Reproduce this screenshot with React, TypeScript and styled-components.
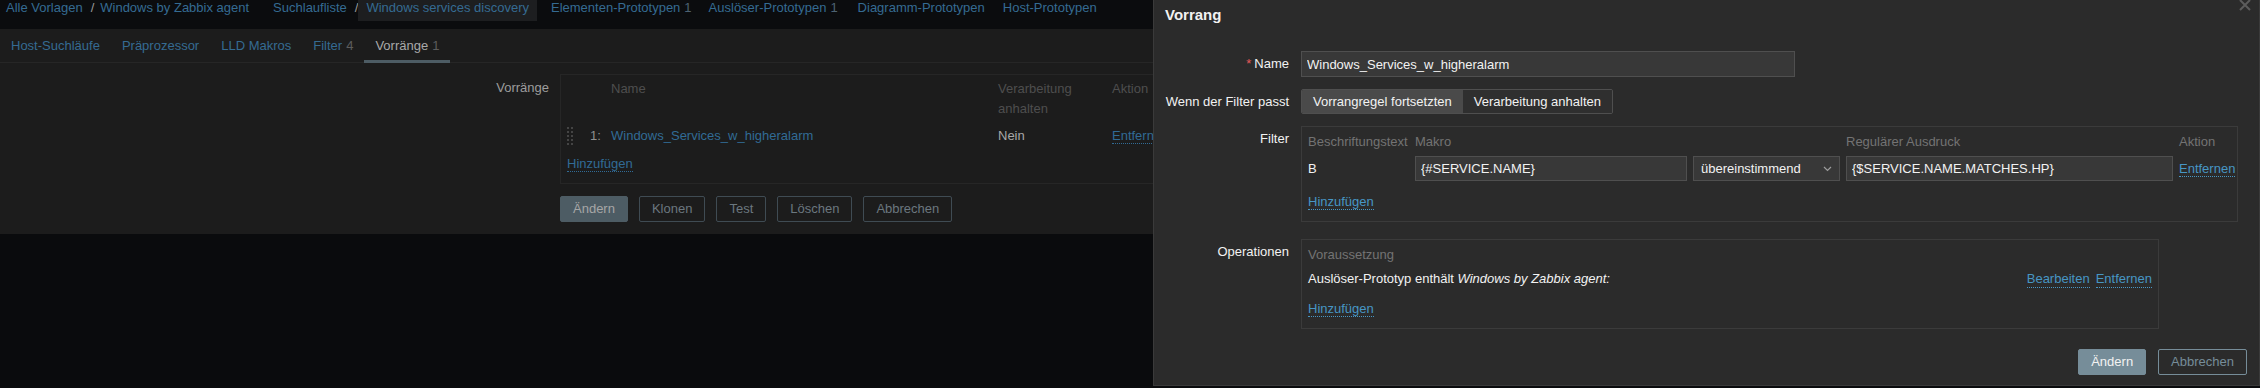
import * as React from 'react';
import styled, { createGlobalStyle } from 'styled-components';

const GlobalStyle = createGlobalStyle`
  html, body {
    margin: 0;
    padding: 0;
    background: #0a0b0d;
  }
  body {
    font-family: "Liberation Sans", Arial, sans-serif;
    font-size: 13px;
    line-height: 16px;
  }
  * {
    box-sizing: border-box;
  }
`;

const Screen = styled.div`
  position: relative;
  width: 2260px;
  height: 388px;
  overflow: hidden;
  background: #0a0b0d;
`;

/* ---------- page behind the dialog (dimmed) ---------- */

const TopNav = styled.nav`
  display: flex;
  align-items: flex-start;
  height: 29px;
  padding-left: 6px;
  background: #0b0c0e;
  white-space: nowrap;
`;

const NavLink = styled.span<{ $ml?: number }>`
  margin-left: ${(p) => p.$ml ?? 0}px;
  color: #356b92;
`;

const NavSep = styled.span<{ $mr?: number }>`
  margin: 0 ${(p) => p.$mr ?? 7}px 0 8px;
  color: #9a9a9a;
`;

const NavCurrent = styled.span`
  height: 21px;
  padding: 0 8px;
  background: #1d1e20;
  color: #356b92;
`;

const Count = styled.span`
  margin-left: 4px;
  color: #4d6272;
`;

const TabBar = styled.div`
  display: flex;
  align-items: flex-start;
  height: 34px;
  background: #1c1c1c;
  border-bottom: 1px solid #262626;
`;

const Tab = styled.span<{ $active?: boolean }>`
  height: 34px;
  padding: 9px 11px 0;
  color: ${(p) => (p.$active ? '#a9a9a9' : '#356b92')};
  border-bottom: 3px solid ${(p) => (p.$active ? '#4d5c64' : 'transparent')};
  white-space: nowrap;
`;

const TabCount = styled.span`
  margin-left: 4px;
  color: #5c5c5c;
`;

const Content = styled.div`
  background: #1c1c1c;
  padding: 11px 0 12px;
`;

const PageForm = styled.div`
  display: grid;
  grid-template-columns: 549px 720px;
  column-gap: 11px;
  row-gap: 12px;
`;

const PageLabel = styled.div`
  padding-top: 6px;
  text-align: right;
  color: #9d9d9d;
`;

const OverrideBox = styled.div`
  border: 1px solid #262626;
  padding: 4px 0 11px 6px;
`;

const OverrideGrid = styled.div`
  display: grid;
  grid-template-columns: 23px 21px 387px 114px auto;
  line-height: 20px;
  row-gap: 7px;
`;

const HeadCell = styled.div`
  color: #4e4e4e;
`;

const Handle = styled.svg`
  display: block;
`;

const RowNum = styled.div`
  color: #8f8f8f;
`;

const PageLink = styled.a<{ $dotted?: boolean }>`
  color: #316b95;
  text-decoration: none;
  border-bottom: 1px dotted ${(p) => (p.$dotted ? '#316b95' : 'transparent')};
`;

const PlainCell = styled.div`
  color: #a8a8a8;
`;

const AddRow = styled.div`
  margin-top: 10px;
`;

const ButtonRow = styled.div`
  display: flex;
  gap: 11px;
`;

const PageButton = styled.button<{ $primary?: boolean }>`
  height: 26px;
  padding: 0 12px;
  font: inherit;
  border-radius: 2px;
  border: 1px solid ${(p) => (p.$primary ? '#4d5c64' : '#3f4b53')};
  background: ${(p) => (p.$primary ? '#4d5c64' : 'transparent')};
  color: ${(p) => (p.$primary ? '#a6a6a6' : '#6b777f')};
`;

/* ---------- dialog ---------- */

const Dialog = styled.div`
  position: absolute;
  top: -1px;
  left: 1153px;
  width: 1107px;
  background: #2b2b2b;
  border: 1px solid #3a3a3a;
  color: #f2f2f2;
`;

const CloseBtn = styled.svg`
  position: absolute;
  top: -1px;
  right: 8px;
`;

const DialogTitle = styled.h4`
  margin: 0;
  height: 30px;
  padding: 6px 11px;
  font-size: 15px;
  line-height: 18px;
  font-weight: bold;
`;

const DialogForm = styled.div`
  display: grid;
  grid-template-columns: 124px 1fr;
  column-gap: 12px;
  row-gap: 12px;
  padding: 21px 11px 0;
`;

const Label = styled.label`
  padding-top: 5px;
  text-align: right;
  white-space: nowrap;
`;

const Req = styled.span`
  color: #e45959;
  margin-right: 3px;
`;

const TextInput = styled.input<{ $w: number; $h?: number }>`
  display: block;
  width: ${(p) => p.$w}px;
  height: ${(p) => p.$h ?? 26}px;
  padding: 0 5px;
  font: inherit;
  color: #f2f2f2;
  background: #383838;
  border: 1px solid #4f4f4f;
  outline: none;
`;

const Segmented = styled.div`
  display: inline-flex;
  height: 25px;
  border: 1px solid #4f4f4f;
  border-radius: 2px;
  overflow: hidden;
`;

const Segment = styled.span<{ $on?: boolean }>`
  padding: 0 11px;
  line-height: 23px;
  background: ${(p) => (p.$on ? '#4a4a4a' : '#2f2f2f')};
  white-space: nowrap;
`;

const Panel = styled.div<{ $w: number }>`
  width: ${(p) => p.$w}px;
  border: 1px solid #3b3b3b;
  padding: 7px 6px 11px;
`;

const FilterPanel = styled(Panel)`
  margin-bottom: 5px;
`;

const FilterGrid = styled.div`
  display: grid;
  grid-template-columns: 101px 272px 147px 327px auto;
  column-gap: 6px;
  row-gap: 6px;
  align-items: center;
`;

const ColHead = styled.div`
  color: #737373;
  white-space: nowrap;
`;

const SelectBox = styled.div`
  display: flex;
  align-items: center;
  justify-content: space-between;
  height: 25px;
  padding: 0 7px;
  background: #383838;
  border: 1px solid #4f4f4f;
`;

const Link = styled.a`
  color: #4796c4;
  text-decoration: none;
  border-bottom: 1px dotted #4796c4;
  white-space: nowrap;
`;

const PanelFoot = styled.div`
  margin-top: 13px;
`;

const OpRow = styled.div`
  display: flex;
  justify-content: space-between;
  margin-top: 8px;
`;

const OpActions = styled.div`
  display: flex;
  gap: 6px;
`;

const DialogFooter = styled.div`
  display: flex;
  justify-content: flex-end;
  gap: 12px;
  padding: 20px 12px 10px;
`;

const DialogButton = styled.button<{ $primary?: boolean }>`
  height: 26px;
  padding: 0 12px;
  font: inherit;
  border-radius: 2px;
  border: 1px solid #768d99;
  background: ${(p) => (p.$primary ? '#768d99' : 'transparent')};
  color: ${(p) => (p.$primary ? '#f2f2f2' : '#768d99')};
`;

const DragHandle = () => (
  <Handle width="6" height="20" viewBox="0 0 6 20">
    {[1, 5, 9, 13, 17].map((y) => (
      <g key={y} fill="#444">
        <rect x="0" y={y} width="2" height="2" />
        <rect x="4" y={y} width="2" height="2" />
      </g>
    ))}
  </Handle>
);

const App: React.FC = () => (
  <Screen>
    <GlobalStyle />
    <TopNav>
      <NavLink>Alle Vorlagen</NavLink>
      <NavSep $mr={6}>/</NavSep>
      <NavLink>Windows by Zabbix agent</NavLink>
      <NavLink $ml={24}>Suchlaufliste</NavLink>
      <NavSep $mr={0}>/</NavSep>
      <NavCurrent>Windows services discovery</NavCurrent>
      <NavLink $ml={14}>
        Elementen-Prototypen<Count>1</Count>
      </NavLink>
      <NavLink $ml={17}>
        Auslöser-Prototypen<Count>1</Count>
      </NavLink>
      <NavLink $ml={20}>Diagramm-Prototypen</NavLink>
      <NavLink $ml={18}>Host-Prototypen</NavLink>
    </TopNav>

    <TabBar>
      <Tab>Host-Suchläufe</Tab>
      <Tab>Präprozessor</Tab>
      <Tab>LLD Makros</Tab>
      <Tab>
        Filter<TabCount>4</TabCount>
      </Tab>
      <Tab $active>
        Vorränge<TabCount>1</TabCount>
      </Tab>
    </TabBar>

    <Content>
      <PageForm>
        <PageLabel>Vorränge</PageLabel>
        <OverrideBox>
          <OverrideGrid>
            <div />
            <div />
            <HeadCell>Name</HeadCell>
            <HeadCell>Verarbeitung anhalten</HeadCell>
            <HeadCell>Aktion</HeadCell>

            <DragHandle />
            <RowNum>1:</RowNum>
            <div>
              <PageLink>Windows_Services_w_higheralarm</PageLink>
            </div>
            <PlainCell>Nein</PlainCell>
            <div>
              <PageLink $dotted>Entfernen</PageLink>
            </div>
          </OverrideGrid>
          <AddRow>
            <PageLink $dotted>Hinzufügen</PageLink>
          </AddRow>
        </OverrideBox>
        <div />
        <ButtonRow>
          <PageButton $primary>Ändern</PageButton>
          <PageButton>Klonen</PageButton>
          <PageButton>Test</PageButton>
          <PageButton>Löschen</PageButton>
          <PageButton>Abbrechen</PageButton>
        </ButtonRow>
      </PageForm>
    </Content>

    <Dialog>
      <DialogTitle>Vorrang</DialogTitle>
      <CloseBtn width="12" height="12" viewBox="0 0 12 12">
        <path d="M1 1L11 11M11 1L1 11" stroke="#5c5c5c" strokeWidth="2" />
      </CloseBtn>

      <DialogForm>
        <Label>
          <Req>*</Req>Name
        </Label>
        <TextInput $w={494} readOnly value="Windows_Services_w_higheralarm" />

        <Label>Wenn der Filter passt</Label>
        <div>
          <Segmented>
            <Segment $on>Vorrangregel fortsetzten</Segment>
            <Segment>Verarbeitung anhalten</Segment>
          </Segmented>
        </div>

        <Label>Filter</Label>
        <FilterPanel $w={937}>
          <FilterGrid>
            <ColHead>Beschriftungstext</ColHead>
            <ColHead>Makro</ColHead>
            <ColHead />
            <ColHead>Regulärer Ausdruck</ColHead>
            <ColHead>Aktion</ColHead>

            <div>B</div>
            <TextInput $w={272} $h={25} readOnly value="{#SERVICE.NAME}" />
            <SelectBox>
              <span>übereinstimmend</span>
              <svg width="9" height="6" viewBox="0 0 9 6">
                <path d="M1 1l3.5 3.5L8 1" stroke="#9d9d9d" strokeWidth="1.2" fill="none" />
              </svg>
            </SelectBox>
            <TextInput $w={327} $h={25} readOnly value="{$SERVICE.NAME.MATCHES.HP}" />
            <div>
              <Link>Entfernen</Link>
            </div>
          </FilterGrid>
          <PanelFoot>
            <Link>Hinzufügen</Link>
          </PanelFoot>
        </FilterPanel>

        <Label>Operationen</Label>
        <Panel $w={858}>
          <ColHead>Voraussetzung</ColHead>
          <OpRow>
            <span>
              Auslöser-Prototyp enthält <i>Windows by Zabbix agent:</i>
            </span>
            <OpActions>
              <Link>Bearbeiten</Link>
              <Link>Entfernen</Link>
            </OpActions>
          </OpRow>
          <PanelFoot>
            <Link>Hinzufügen</Link>
          </PanelFoot>
        </Panel>
      </DialogForm>

      <DialogFooter>
        <DialogButton $primary>Ändern</DialogButton>
        <DialogButton>Abbrechen</DialogButton>
      </DialogFooter>
    </Dialog>
  </Screen>
);

export default App;
